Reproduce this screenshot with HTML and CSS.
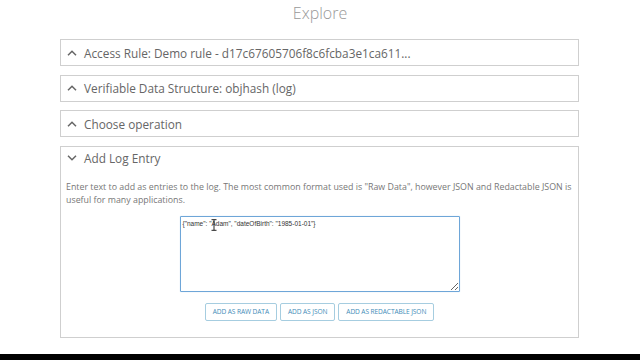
FILE: index.html
```html
<!DOCTYPE html>
<html>
<head>
<meta charset="utf-8">
<link rel="stylesheet" href="styles.css">
</head>
<body>
<div class="page">
  <h1 class="title">Explore</h1>
  <div class="panels">
    <div class="panel">
      <div class="panel-head">
        <svg class="chev" width="10" height="6" viewBox="0 0 10 6"><path d="M1 5.2 L5 1.2 L9 5.2" fill="none" stroke="#666" stroke-width="1.5"/></svg>
        <span>Access Rule: Demo rule - d17c67605706f8c6fcba3e1ca611...</span>
      </div>
    </div>
    <div class="panel">
      <div class="panel-head">
        <svg class="chev" width="10" height="6" viewBox="0 0 10 6"><path d="M1 5.2 L5 1.2 L9 5.2" fill="none" stroke="#666" stroke-width="1.5"/></svg>
        <span>Verifiable Data Structure: objhash (log)</span>
      </div>
    </div>
    <div class="panel">
      <div class="panel-head">
        <svg class="chev" width="10" height="6" viewBox="0 0 10 6"><path d="M1 5.2 L5 1.2 L9 5.2" fill="none" stroke="#666" stroke-width="1.5"/></svg>
        <span>Choose operation</span>
      </div>
    </div>
    <div class="panel panel-open">
      <div class="panel-head">
        <svg class="chev" width="10" height="6" viewBox="0 0 10 6"><path d="M1 0.8 L5 4.8 L9 0.8" fill="none" stroke="#666" stroke-width="1.5"/></svg>
        <span>Add Log Entry</span>
      </div>
      <div class="panel-body">
        <p class="desc">Enter text to add as entries to the log. The most common format used is "Raw Data", however JSON and Redactable JSON is useful for many applications.</p>
        <div class="editor">
          <textarea class="entry">{"name": "Adam", "dateOfBirth": "1985-01-01"}</textarea>
          <svg class="ibeam" width="6" height="12" viewBox="0 0 6 12"><path d="M0.5 0.7 H5.5 M3 0.7 V11.3 M0.5 11.3 H5.5" fill="none" stroke="#222" stroke-width="1"/></svg>
        </div>
        <div class="actions">
          <button class="btn">Add as raw data</button>
          <button class="btn">Add as JSON</button>
          <button class="btn">Add as redactable JSON</button>
        </div>
      </div>
    </div>
  </div>
  <div class="spacer"></div>
  <div class="footer-bar"></div>
</div>
</body>
</html>
```

FILE: styles.css
```css
html, body {
  margin: 0;
  padding: 0;
  background: #fff;
}
.page {
  width: 640px;
  height: 360px;
  display: flex;
  flex-direction: column;
  font-family: "Open Sans", "Liberation Sans", sans-serif;
  color: #666;
  overflow: hidden;
}
.title {
  margin: 0;
  height: 29px;
  padding-top: 3px;
  box-sizing: border-box;
  font-size: 16px;
  line-height: 20px;
  font-weight: 300;
  color: #999;
  text-align: center;
}
.panels {
  margin: 10px 61px 0 60px;
  display: flex;
  flex-direction: column;
  gap: 8.5px;
}
.panel {
  border: 1px solid #cfcfcf;
}
.panel-head {
  height: 25px;
  display: flex;
  align-items: center;
  gap: 7px;
  padding-left: 6px;
  font-size: 11.8px;
  color: #666;
}
.panel-open .panel-head {
  height: 22px;
}
.chev {
  display: block;
  flex: none;
}
.panel-body {
  padding: 12px 5px 16px 5px;
  display: flex;
  flex-direction: column;
  align-items: center;
}
.desc {
  margin: 0;
  align-self: stretch;
  font-size: 8.85px;
  line-height: 13px;
  color: #777;
}
.editor {
  position: relative;
  margin-top: 9px;
}
.entry {
  display: block;
  width: 280px;
  height: 76px;
  box-sizing: border-box;
  margin: 0;
  padding: 2px 2px;
  border: 1px solid #6ea6d8;
  border-radius: 1px;
  box-shadow: 0 0 1px #a9cbea;
  font-family: "Liberation Sans", Arial, sans-serif;
  font-size: 6.5px;
  line-height: 9px;
  color: #333;
  resize: both;
  outline: none;
}
.ibeam {
  position: absolute;
  left: 31px;
  top: 3px;
}
.actions {
  margin-top: 11px;
  display: flex;
  gap: 3px;
}
.btn {
  height: 18px;
  padding: 0 7px;
  background: #fff;
  border: 1px solid #a6cde0;
  border-radius: 2px;
  font-family: "Open Sans", "Liberation Sans", sans-serif;
  font-size: 6.6px;
  text-transform: uppercase;
  color: #3f8cb8;
  letter-spacing: -0.1px;
}
.spacer {
  flex: 1;
}
.footer-bar {
  height: 6px;
  background: #000;
}
```
